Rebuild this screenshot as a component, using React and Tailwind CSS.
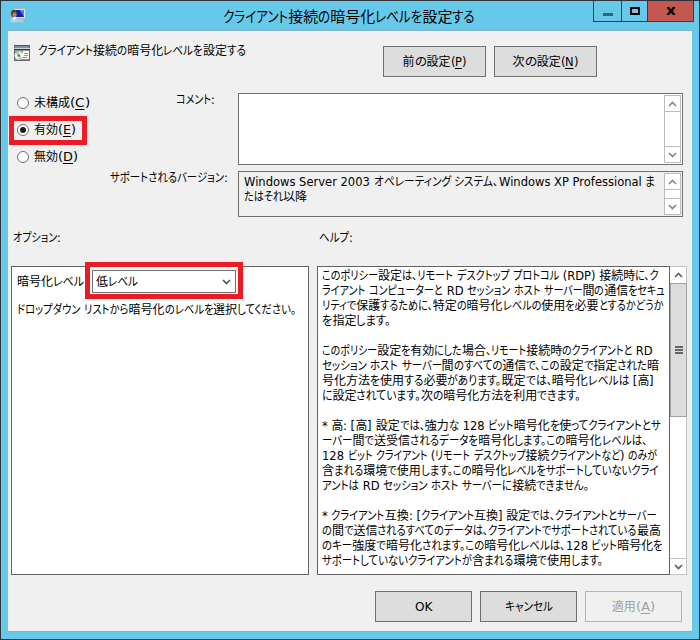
import React, { useLayoutEffect, useRef } from "react";

// Splits a label into kana, kanji and latin runs; "_X" marks an underlined access key.
function splitRuns(text) {
  return text.match(/_.|[\u3001\u3002\u3040-\u30ff]+|[\u3400-\u9fff]+|[^_\u3001\u3002\u3040-\u30ff\u3400-\u9fff]+/g) || [];
}

const isKana = (s) => /^[\u3001\u3002\u3040-\u30ff]/.test(s);
const isKanji = (s) => /^[\u3400-\u9fff]/.test(s);

// One line of UI text with condensed kana, set to the width w.
function T({ children, w, className = "" }) {
  const ref = useRef(null);
  const runs = splitRuns(children);
  useLayoutEffect(() => {
    const outers = Array.from(ref.current.children);
    const data = outers.map((o) => {
      o.style.width = "auto";
      o.firstChild.style.transform = "none";
      return { o, width: o.getBoundingClientRect().width, kind: o.dataset.kind };
    });
    let fixed = 0;
    let kana = 0;
    let latin = 0;
    data.forEach((d) => {
      if (d.kind === "kana") kana += d.width;
      else if (d.kind === "kanji") fixed += d.width;
      else latin += d.width;
    });
    const latinK = kana > 0 ? 0.96 : latin > 0 ? (w - fixed) / latin : 1;
    const kanaK = kana > 0 ? (w - fixed - latin * latinK) / kana : 1;
    data.forEach((d) => {
      const k = d.kind === "kana" ? kanaK : d.kind === "kanji" ? 1 : latinK;
      d.o.style.width = d.width * k + "px";
      d.o.firstChild.style.transform = "scaleX(" + k + ")";
    });
  }, [children, w]);
  return (
    <span ref={ref} className={"block translate-y-px whitespace-pre " + className}>
      {runs.map((r, i) => {
        const kind = isKana(r) ? "kana" : isKanji(r) ? "kanji" : "latin";
        const key = r[0] === "_";
        return (
          <span key={i} data-kind={kind} className="inline-block align-baseline">
            <span
              className={
                "inline-block origin-left " +
                (kind === "latin" ? "" : "[font-feature-settings:'palt'] ") +
                (key ? "underline underline-offset-2" : "")
              }
            >
              {key ? r.slice(1) : r}
            </span>
          </span>
        );
      })}
    </span>
  );
}

function Chevron({ down, color = "#888888" }) {
  return (
    <svg width="9" height="6" viewBox="0 0 9 6" fill="none" stroke={color} strokeWidth="1.7">
      <path d={down ? "M1 1 L4.5 4.5 L8 1" : "M1 5 L4.5 1.5 L8 5"} />
    </svg>
  );
}

function SmallScroll() {
  return (
    <div className="flex w-[17px] flex-col border border-[#bcbcbc] bg-white">
      <div className="flex h-[16px] items-center justify-center border-b border-[#bcbcbc]">
        <Chevron />
      </div>
      <div className="flex-1" />
      <div className="flex h-[16px] items-center justify-center border-t border-[#bcbcbc]">
        <Chevron down />
      </div>
    </div>
  );
}

function Radio({ label, w, checked }) {
  return (
    <div className="flex h-[27px] items-center">
      <span className="mr-[5px] flex size-[12px] items-center justify-center rounded-full border border-[#707070] bg-white">
        {checked && <span className="size-[6px] rounded-full bg-[#1c1c1c]" />}
      </span>
      <T w={w}>{label}</T>
    </div>
  );
}

function Button({ children, w, className = "" }) {
  return (
    <div className={"flex h-[31px] items-center justify-center border " + className}>
      <T w={w}>{children}</T>
    </div>
  );
}

const help = [
  ["このポリシー設定は、リモート デスクトップ プロトコル (RDP) 接続時に、ク", 337],
  ["ライアント コンピューターと RD セッション ホスト サーバー間の通信をセキュ", 343],
  ["リティで保護するために、特定の暗号化レベルの使用を必要とするかどうか", 341],
  ["を指定します。", 69],
  ["", 0],
  ["このポリシー設定を有効にした場合、リモート接続時のクライアントと RD", 331],
  ["セッション ホスト サーバー間のすべての通信で、この設定で指定された暗", 337],
  ["号化方法を使用する必要があります。既定では、暗号化レベルは [高]", 332],
  ["に設定されています。次の暗号化方法を利用できます。", 259],
  ["", 0],
  ["* 高: [高] 設定では、強力な 128 ビット暗号化を使ってクライアントとサ", 339],
  ["ーバー間で送受信されるデータを暗号化します。この暗号化レベルは、", 325],
  ["128 ビット クライアント (リモート デスクトップ接続クライアントなど) のみが", 335],
  ["含まれる環境で使用します。この暗号化レベルをサポートしていないクライ", 337],
  ["アントは RD セッション ホスト サーバーに接続できません。", 267],
  ["", 0],
  ["* クライアント互換: [クライアント互換] 設定では、クライアントとサーバー", 335],
  ["の間で送信されるすべてのデータは、クライアントでサポートされている最高", 339],
  ["のキー強度で暗号化されます。この暗号化レベルは、128 ビット暗号化を", 341],
  ["サポートしていないクライアントが含まれる環境で使用します。", 281],
];

function RemoteIcon() {
  return (
    <svg width="17" height="17" viewBox="0 0 17 17">
      <rect x="3.500" y=".500" width="12" height="10" fill="#e4e2da" stroke="#b4b2a8" strokeWidth=".8" />
      <rect x="5" y="2" width="9" height="7" fill="#0a1fb4" />
      <path d="M9.500 2H14v7z" fill="#4f7cf0" />
      <path d="M8 11h4l1 1.500h1V14H8z" fill="#c9c4b0" />
      <ellipse cx="4" cy="5.500" rx="3" ry="3.700" fill="#54442f" />
      <ellipse cx="4.600" cy="6.800" rx="2" ry="2.600" fill="#b5835a" />
      <path d="M0 13.500Q.5 9.500 4 9.500t5 4q-4.500 2-9 0z" fill="#b4d2ee" />
      <path d="M3 9.500l1.500 3 1.500-3z" fill="#fff" />
    </svg>
  );
}

function PolicyIcon() {
  return (
    <svg width="16" height="16" viewBox="0 0 16 16" shapeRendering="crispEdges">
      <rect width="16" height="16" fill="#5f6c6c" />
      <rect x="1" y="0" width="14" height="1" fill="#3f5370" />
      <rect x="1" y="1" width="14" height="2" fill="#7f93a8" />
      <rect x="0" y="3" width="16" height="1" fill="#c9d3d8" />
      <rect x="0" y="4" width="16" height="1" fill="#26356c" />
      <rect x="1" y="5" width="14" height="10" fill="#8d9a94" />
      <g shapeRendering="auto">
        <circle cx="4.800" cy="10.500" r="4.300" fill="#eceeea" />
        <path d="M4.800 10.500L1.500 8a4.300 4.300 0 0 1 3.300-1.800z" fill="#a8cf95" />
        <path d="M4.800 10.500L8 13a4.300 4.300 0 0 1-3.200 1.800z" fill="#c4c6da" />
        <circle cx="4.800" cy="10.500" r="1.200" fill="#5f6f68" />
      </g>
      <path d="M8 8h1V6h6v8H8z" fill="#fbf8ec" />
      <path d="M10 8.500h4M10 10.500h4M9 12.500h4" stroke="#a3935f" />
    </svg>
  );
}

export default function App() {
  return (
    <div className="flex h-[640px] w-[700px] flex-col overflow-hidden border border-[#2f3337] bg-[#66c9ea] px-[7px] pb-[7px] font-['DejaVu_Sans','Noto_Sans_CJK_JP',sans-serif] text-[12px] leading-[15px] text-black">
      <header className="flex h-[29px] shrink-0">
        <div className="w-[215px] pt-[7px] pl-[2px]">
          <RemoteIcon />
        </div>
        <div className="w-[370px] pt-[5px] text-[15px] leading-[20px]">
          <T w={252}>クライアント接続の暗号化レベルを設定する</T>
        </div>
        <div className="-mr-[2px] flex h-[21px] w-[101px] border-x border-b border-[#2f3f49]">
          <div className="flex w-[28px] items-end justify-center border-r border-[#2f3f49] pb-[5px]">
            <span className="h-[3px] w-[10px] bg-[#31687a]" />
          </div>
          <div className="flex w-[26px] justify-center border-r border-[#2f3f49] pt-[6px]">
            <span className="h-[8px] w-[10px] border-2 border-black" />
          </div>
          <div className="flex flex-1 justify-center bg-[#c45850] pt-[6px]">
            <svg width="10" height="8" viewBox="0 0 10 8" stroke="#000" strokeWidth="2.400">
              <path d="M1.500 0L8.500 8M8.500 0L1.500 8" />
            </svg>
          </div>
        </div>
      </header>

      <main className="flex h-[602px] shrink-0 flex-col border-t border-b border-[#7fb2cc] bg-[#f0f0f0]">
        <div className="flex h-[62px] shrink-0">
          <div className="w-[30px] pt-[14px] pl-[6px]">
            <PolicyIcon />
          </div>
          <div className="w-[345px] pt-[12px]">
            <T w={208}>クライアント接続の暗号化レベルを設定する</T>
          </div>
          <div className="flex gap-[8px] pt-[15px]">
            <Button w={64} className="w-[103px] border-[#707070] bg-[#dddddd]">前の設定(_P)</Button>
            <Button w={66} className="w-[103px] border-[#707070] bg-[#dddddd]">次の設定(_N)</Button>
          </div>
        </div>

        <div className="flex h-[132px] shrink-0">
          <div className="relative -top-[4px] w-[94px] pl-[9px]">
            <Radio w={56} label="未構成(_C)" />
            <Radio w={42} label="有効(_E)" checked />
            <Radio w={44} label="無効(_D)" />
            <div className="absolute top-[27px] left-px h-[29px] w-[78px] border-[5px] border-[#ed1c24]" />
          </div>
          <div className="flex w-[136px] flex-col pl-[8px]">
            <T w={39} className="-mt-px ml-[66px] h-[78px]">コメント:</T>
            <T w={118}>サポートされるバージョン:</T>
          </div>
          <div className="flex w-[445px] flex-col gap-[6px]">
            <div className="flex h-[72px] justify-end border border-[#707070] bg-white p-px">
              <SmallScroll />
            </div>
            <div className="flex h-[46px] justify-between border border-[#707070] p-px">
              <div className="pt-px pl-[4px]">
                <T w={411}>Windows Server 2003 オペレーティング システム、Windows XP Professional ま</T>
                <T w={63}>たはそれ以降</T>
              </div>
              <SmallScroll />
            </div>
          </div>
        </div>

        <div className="flex h-[41px] shrink-0 pt-[5px]">
          <T w={48} className="ml-[5px] w-[306px]">オプション:</T>
          <T w={34}>ヘルプ:</T>
        </div>

        <div className="flex h-[309px] shrink-0 pl-[3px]">
          <section className="mr-[8px] w-[298px] border border-[#646464] bg-white pl-[5px]">
            <div className="flex h-[33px]">
              <T w={67} className="mt-[7px] w-[68px]">暗号化レベル</T>
              <div className="relative -top-[5px] h-[37px] w-[158px] border-[5px] border-[#ed1c24] px-[2px] py-[3px]">
                <div className="flex h-[23px] w-[144px] items-center justify-between border border-[#707070] bg-white pr-[4px] pl-[3px]">
                  <T w={42}>低レベル</T>
                  <Chevron down color="#555555" />
                </div>
              </div>
            </div>
            <T w={279} className="mt-[2px]">ドロップダウン リストから暗号化のレベルを選択してください。</T>
          </section>
          <section className="w-[353px] border border-[#646464] bg-white pt-px pl-[4px]">
            {help.map(([line, w], i) => (
              <div key={i} className="h-[15px]">
                {line && <T w={w}>{line}</T>}
              </div>
            ))}
          </section>
          <div className="flex w-[17px] flex-col border border-l-0 border-[#c4c4c4] bg-white">
            <div className="flex h-[16px] items-center justify-center">
              <Chevron color="#606060" />
            </div>
            <div className="-mr-px flex h-[134px] flex-col items-center justify-center gap-px border border-[#a3a3a3] bg-[#dcdcdc]">
              <span className="h-[2px] w-[8px] bg-[#666]" />
              <span className="h-[2px] w-[8px] bg-[#666]" />
              <span className="h-[2px] w-[8px] bg-[#666]" />
            </div>
            <div className="flex-1" />
            <div className="flex h-[16px] items-center justify-center border-t border-[#c4c4c4]">
              <Chevron down color="#606060" />
            </div>
          </div>
        </div>

        <div className="flex gap-[8px] pt-[16px] pl-[367px]">
          <Button w={17.5} className="w-[97px] border-[#3c7fb1] bg-[#dddddd]">OK</Button>
          <Button w={48} className="w-[97px] border-[#707070] bg-[#dddddd]">キャンセル</Button>
          <Button w={43.5} className="w-[97px] border-[#b5b5b5] text-[#a0a0a0]">適用(_A)</Button>
        </div>
      </main>
    </div>
  );
}
